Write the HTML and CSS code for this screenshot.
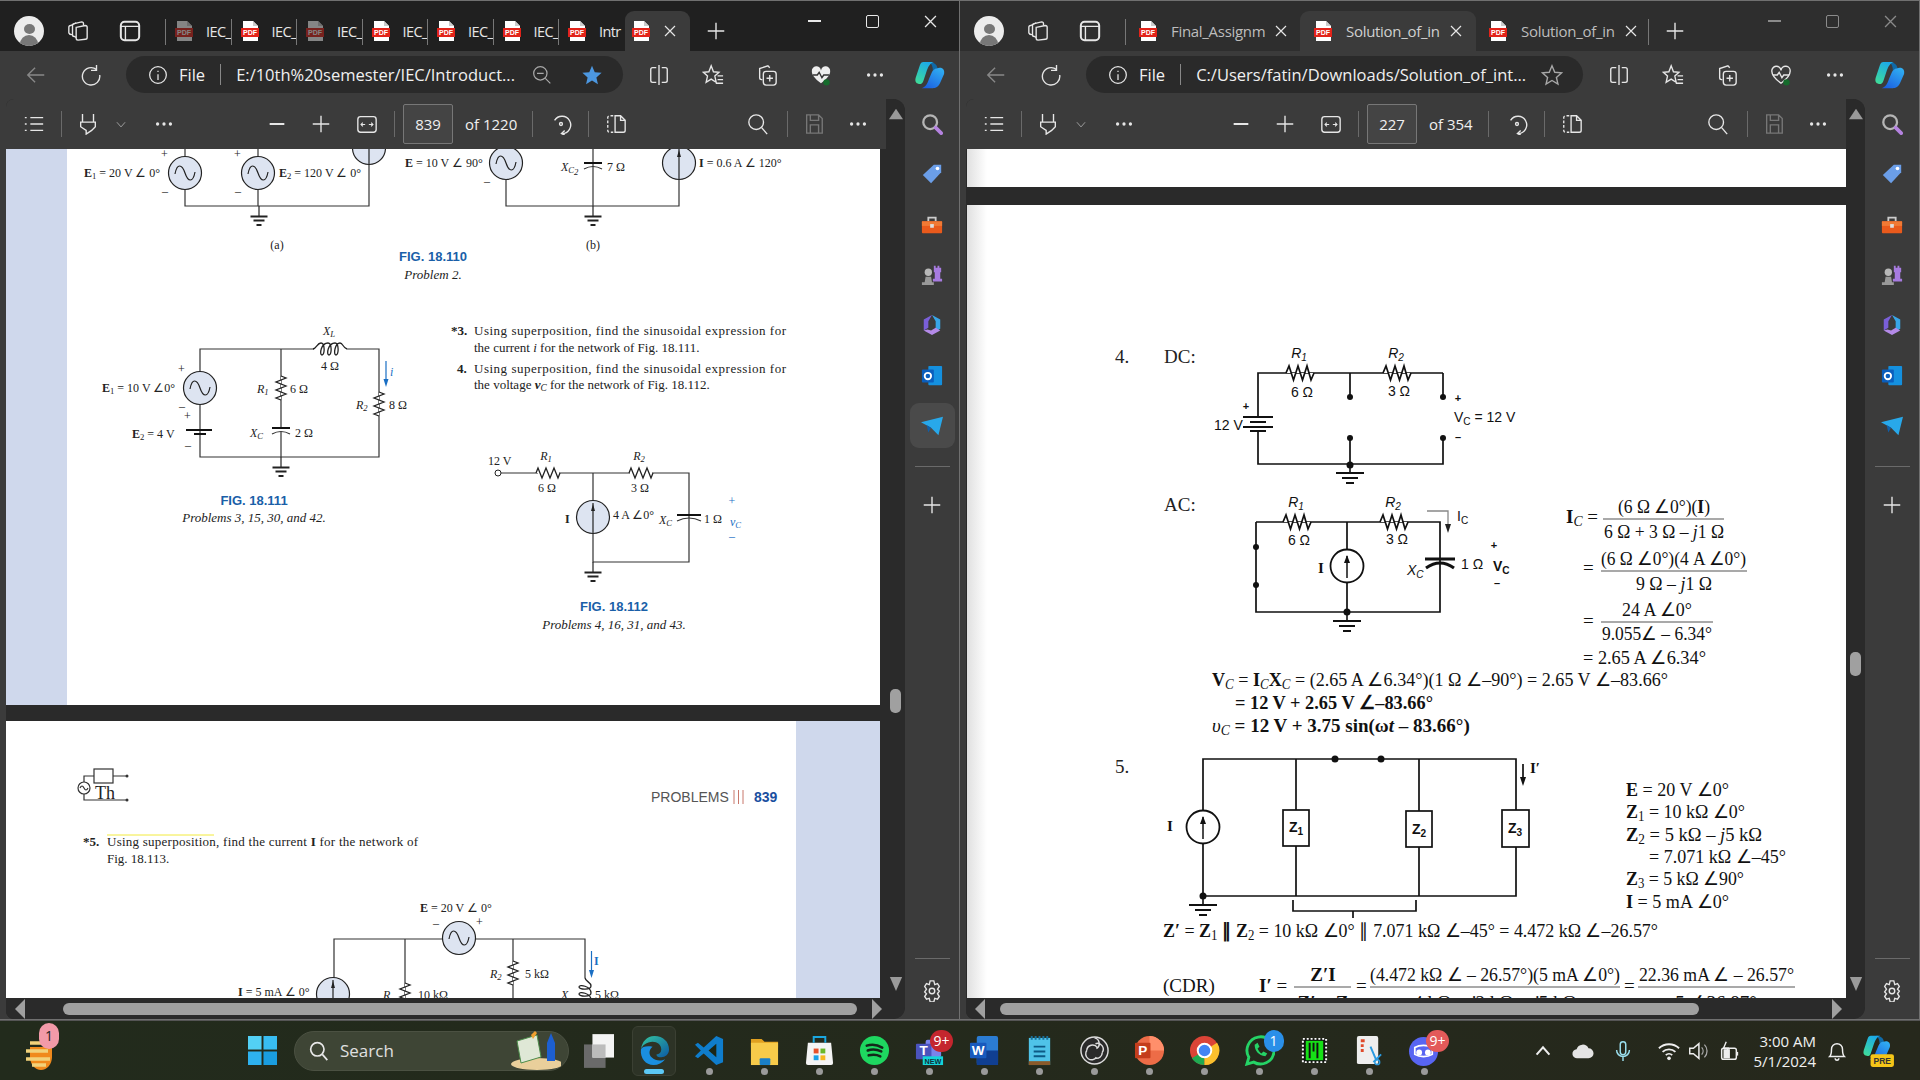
FILE: index.html
```html
<!DOCTYPE html>
<html lang="en">
<head>
    <meta charset="UTF-8">
    <title>Edge PDF windows</title>
    <link rel="stylesheet" href="styles.css">
</head>
<body>
<!-- shared icons and circuit parts -->
<svg class="defs" width="0" height="0">
    <defs>
        <linearGradient id="cop" x1="0.7" y1="0" x2="0.2" y2="1"><stop offset="0" stop-color="#1aa8ec"/><stop offset="1" stop-color="#3fdc9a"/></linearGradient>
        <linearGradient id="cop2" x1="0.8" y1="0" x2="0.1" y2="1"><stop offset="0" stop-color="#30aef2"/><stop offset="1" stop-color="#1a5ce0"/></linearGradient>
        <linearGradient id="edge" x1="0" y1="0" x2="1" y2="1"><stop offset="0" stop-color="#35c7a0"/><stop offset="1" stop-color="#0c59a4"/></linearGradient>
        <symbol id="pdf" viewBox="0 0 18 22">
            <path d="M2 1h10l5 5v15H2z" fill="#fff"/><path d="M12 1v5h5" fill="#ccc"/>
            <rect x="0" y="8" width="18" height="9" fill="#e2231a"/>
            <text x="9" y="15" class="pdf-word">PDF</text>
        </symbol>
        <symbol id="i-x" viewBox="0 0 12 12"><path d="M1 1l10 10M11 1L1 11" class="ln thin"/></symbol>
        <symbol id="i-workspace" viewBox="0 0 24 24"><path d="M10 8l10-2q2 0 2 2v11q0 2-2 2l-8 1q-2 0-2-2z" class="ln"/><path d="M10 19l-2-1q-2 0-2-2V6q0-2 2-2l8-2q2 0 2 2v2" class="ln"/><path d="M6 16H5q-2 0-3-2V8q0-2 2-2l6-3" class="ln"/></symbol>
        <symbol id="i-vtabs" viewBox="0 0 24 24"><rect x="2" y="2" width="20" height="20" rx="4" class="ln bold"/><path d="M2 7h20M7 7v15" class="ln"/></symbol>
        <symbol id="i-back" viewBox="0 0 24 24"><path d="M21 12H3M11 4l-8 8 8 8" class="ln"/></symbol>
        <symbol id="i-reload" viewBox="0 0 24 24"><path d="M18 6A9.500 9.500 0 1 0 21.500 12M18 1v6h-6" class="ln"/></symbol>
        <symbol id="i-info" viewBox="0 0 24 24"><circle cx="12" cy="12" r="10" class="ln"/><path d="M12 11v7M12 7v1.500" class="ln"/></symbol>
        <symbol id="i-zoomout" viewBox="0 0 24 24"><circle cx="10" cy="10" r="8" class="ln dim"/><path d="M6 10h8M16 16l6 6" class="ln dim"/></symbol>
        <symbol id="i-star" viewBox="0 0 24 24"><path d="M12 2l3 7 7.500.6-5.700 5 1.700 7.400-6.500-4-6.500 4 1.700-7.400-5.700-5L9 9z" class="ln dim"/></symbol>
        <symbol id="i-starfill" viewBox="0 0 24 24"><path d="M12 2l3 7 7.500.6-5.700 5 1.700 7.400-6.500-4-6.500 4 1.700-7.400-5.700-5L9 9z" fill="#4c97e0"/></symbol>
        <symbol id="i-split" viewBox="0 0 24 24"><path d="M9 4H5a2 2 0 0 0-2 2v12a2 2 0 0 0 2 2h4M15 4h4a2 2 0 0 1 2 2v12a2 2 0 0 1-2 2h-4M12 1v22" class="ln"/></symbol>
        <symbol id="i-favs" viewBox="0 0 24 24"><path d="M10 2l2.500 6.500 6 .5-4.500 4.200 1.500 6.800-5.500-3.500L4.500 20 6 13.200 1.500 9l6-.5zM17 13h6M17 17h6M15 21h8" class="ln"/></symbol>
        <symbol id="i-coll" viewBox="0 0 24 24"><path d="M7 17H6a2 2 0 0 1-2-2V5l9-3 2 2" class="ln"/><rect x="8" y="8" width="14" height="15" rx="3" class="ln"/><path d="M15 12v7M11.500 15.500h7" class="ln"/></symbol>
        <symbol id="i-heart" viewBox="0 0 24 24"><path d="M12 21C5 16 2 12 2 8a5 5 0 0 1 10-1 5 5 0 0 1 10 1c0 4-3 8-10 13z" class="ln"/><path d="M3 12h5l2-3 3 6 2-3h6" class="ln"/><circle cx="18" cy="20" r="3.500" fill="#156b2c"/></symbol>
        <symbol id="i-heartfill" viewBox="0 0 24 24"><path d="M12 21C5 16 2 12 2 8a5 5 0 0 1 10-1 5 5 0 0 1 10 1c0 4-3 8-10 13z" fill="#eee"/><path d="M3 12h5l2-3 3 6 2-3h6" fill="none" stroke="#333" stroke-width="1.500"/><circle cx="18" cy="20" r="3.500" fill="#156b2c"/></symbol>
        <symbol id="i-more" viewBox="0 0 24 24"><circle cx="5" cy="12" r="1.800" fill="#e6e6e6"/><circle cx="12" cy="12" r="1.800" fill="#e6e6e6"/><circle cx="19" cy="12" r="1.800" fill="#e6e6e6"/></symbol>
        <symbol id="i-copilot" viewBox="0 0 32 32"><path d="M15 2c5 0 9 3 9 7l-5 2c0-4-1-7-4-9z" fill="#0f6aa8"/><path d="M9 2H20C16 3 14 7 12 13L9 22C8 26 5 26 3 25C0 24 0 21 1 18L5 6C6 3 7 2 9 2Z" fill="url(#cop)"/><path d="M23 9C29 7 32 10 31 15L27 24C25 29 22 30 19 30H7C11 29 13 26 15 20L18 13C19 11 21 9 23 9Z" fill="url(#cop2)"/></symbol>
        <symbol id="i-list" viewBox="0 0 24 24"><path d="M8 5h14M8 12h14M8 19h14M2 5h2M2 12h2M2 19h2" class="ln"/></symbol>
        <symbol id="i-hl" viewBox="0 0 24 24"><path d="M6 1v9M18 1v9M4 10h16v5l-4 4v0l-6 4v-4l-6-4z" class="ln"/></symbol>
        <symbol id="i-chev" viewBox="0 0 24 24"><path d="M5 9l7 8 7-8" class="ln dim"/></symbol>
        <symbol id="i-minus" viewBox="0 0 24 24"><path d="M4 12h16" class="ln bold"/></symbol>
        <symbol id="i-plus" viewBox="0 0 24 24"><path d="M3 12h18M12 3v18" class="ln"/></symbol>
        <symbol id="i-fit" viewBox="0 0 24 24"><rect x="2" y="4" width="20" height="17" rx="3" class="ln"/><path d="M6 12.500h4M14 12.500h4M7.500 10.500l-2 2 2 2M16.500 10.500l2 2-2 2" class="ln thin"/></symbol>
        <symbol id="i-rotate" viewBox="0 0 24 24"><path d="M5 8A9.500 9.500 0 1 1 13 22.500" class="ln"/><path d="M16 19l-3.500 3.500 3.500 1.500" class="ln"/><circle cx="12" cy="12" r="1.600" class="ln"/></symbol>
        <symbol id="i-twopage" viewBox="0 0 24 24"><path d="M9 3H5a2 2 0 0 0-2 2v14a2 2 0 0 0 2 2h4" class="ln dash"/><path d="M11 3h6l5 5v11a2 2 0 0 1-2 2h-9zM17 3v5h5" class="ln"/></symbol>
        <symbol id="i-search" viewBox="0 0 24 24"><circle cx="10" cy="10" r="8" class="ln"/><path d="M16 16l6 7" class="ln"/></symbol>
        <symbol id="i-save" viewBox="0 0 24 24"><path d="M4 2h13l4 4v16H4zM8 2v6h9V2M8 22v-9h9v9" class="ln dim2"/></symbol>
        <symbol id="i-up" viewBox="0 0 16 12"><path d="M8 0l8 12H0z" fill="#9a9a9a"/></symbol>
        <symbol id="i-down" viewBox="0 0 16 16"><path d="M1 0h14L8 16z" fill="#9a9a9a"/></symbol>
        <symbol id="i-gear" viewBox="0 0 24 24"><path d="M10 1h4l1 4 3-1 2 3-2 3 2 2-2 3 2 3-2 3-3-1-1 4h-4l-1-4-3 1-2-3 2-3-2-2 2-3-2-3 2-3 3 1z" class="ln"/><circle cx="12" cy="12" r="3" class="ln"/></symbol>
        <symbol id="s-search" viewBox="0 0 24 24"><circle cx="10" cy="10" r="7.500" fill="none" stroke="#b5b5b5" stroke-width="2.500"/><path d="M16 16l6 6" stroke="#b583e0" stroke-width="4" stroke-linecap="round"/></symbol>
        <symbol id="s-tag" viewBox="0 0 24 24"><path d="M14 2h8v8L11 22 2 13z" fill="#6b9ee8"/><circle cx="18" cy="6" r="2" fill="#fff"/></symbol>
        <symbol id="s-box" viewBox="0 0 24 24"><path d="M8 8V4h8v4" fill="none" stroke="#ccc" stroke-width="2"/><rect x="1" y="8" width="22" height="13" rx="1" fill="#e95a1c"/><rect x="1" y="8" width="22" height="5" fill="#f07a35"/><rect x="10" y="11" width="4" height="4" fill="#ddd"/></symbol>
        <symbol id="s-chess" viewBox="0 0 24 24"><path d="M14 2h2v2h2V2h2v2h2v5h-1v7h2v3H13v-3h2V9h-1z" fill="#a77be0"/><circle cx="8" cy="9" r="4" fill="#b8b8b8"/><path d="M5 14h6l1 6h2v3H1v-3h3z" fill="#999"/></symbol>
        <symbol id="s-m365" viewBox="0 0 24 24"><path d="M12 1l9 5v10l-5 3V8z" fill="#38a6e8"/><path d="M12 1L3 6v12l5-3V8z" fill="#7a5fd8"/><path d="M3 18l9 5 9-5-5-3-5 3-4-1z" fill="#b48ae8"/></symbol>
        <symbol id="s-outlook" viewBox="0 0 24 24"><rect x="8" y="1" width="15" height="21" rx="1" fill="#1490df"/><rect x="1" y="5" width="13" height="14" rx="1" fill="#0a5ebd"/><circle cx="7.500" cy="12" r="3.500" fill="none" stroke="#fff" stroke-width="2"/></symbol>
        <symbol id="s-send" viewBox="0 0 24 24"><path d="M0 8l24-6-5 20-8-8z" fill="#28a8ea"/><path d="M6 11l5 3-3 5z" fill="#0f5ea8"/></symbol>
        <!-- circuit parts, drawn around 0,0 -->
        <g id="ac"><circle r="16.500" fill="#dde4f1" stroke="#222" stroke-width="1.200"/><path d="M-10 1C-8-10-3-9 0 0S8 10 10-1" fill="none" stroke="#222" stroke-width="1.200"/></g>
        <g id="isrc"><circle r="16.500" fill="#dde4f1" stroke="#222" stroke-width="1.200"/><path d="M0 16V-14" stroke="#222" stroke-width="1.200"/><path d="M0-13l-2 7h4z" fill="#222"/></g>
        <g id="isrc2"><circle r="16.500" fill="#fff" stroke="#111" stroke-width="1.800"/><path d="M0 12V-10" stroke="#111" stroke-width="1.500"/><path d="M0-11l-3 8h6z" fill="#111"/></g>
        <g id="gnd"><path d="M0 0V10" stroke="#222" stroke-width="1.200"/><path d="M-8.500 10.500H8.500M-5.500 14.500H5.500M-2.500 19H2.500" stroke="#222" stroke-width="2"/></g>
        <g id="gnd2"><path d="M0 0V9" stroke="#111" stroke-width="1.600"/><path d="M-14 9H14M-8 14H8M-4 19H4" stroke="#111" stroke-width="2.200"/></g>
        <path id="res-v" d="M0-12L5-10L-5-6L5-2L-5 2L5 6L-5 10L0 12" fill="#fff" stroke="#222" stroke-width="1.300"/>
        <path id="res-h" d="M-12 0L-10-5L-6 5L-2-5L2 5L6-5L10 5L12 0" fill="#fff" stroke="#222" stroke-width="1.300"/>
        <path id="res-h2" d="M-14 0L-11-7L-6.500 7L-2-7L2.500 7L7-7L11 7L14 0" fill="#fff" stroke="#111" stroke-width="1.700"/>
        <path id="coil" d="M-17 0C-13-1-13-6-9-6C-5-6-5 6-8 6C-11 6-9-6-2-6C2-6 2 6-1 6C-4 6-2-6 5-6C9-6 9 6 6 6C3 6 5-6 10-6C13-6 13-1 17 0" fill="none" stroke="#222" stroke-width="1.300"/>
    </defs>
</svg>

<div class="windows">
    <!-- left window -->
    <section class="window">
        <div class="tabstrip">
            <div class="profile"><span class="head"></span><span class="shoulders"></span></div>
            <svg class="icn wk"><use href="#i-workspace"/></svg>
            <svg class="icn vt"><use href="#i-vtabs"/></svg>
            <span class="tab-sep"></span>
            <div class="tab mini"><svg class="pdf-icon off"><use href="#pdf"/></svg><span class="tab-label">IEC_</span></div>
            <div class="tab mini"><svg class="pdf-icon"><use href="#pdf"/></svg><span class="tab-label">IEC_</span></div>
            <div class="tab mini"><svg class="pdf-icon off"><use href="#pdf"/></svg><span class="tab-label">IEC_</span></div>
            <div class="tab mini"><svg class="pdf-icon"><use href="#pdf"/></svg><span class="tab-label">IEC_</span></div>
            <div class="tab mini"><svg class="pdf-icon"><use href="#pdf"/></svg><span class="tab-label">IEC_</span></div>
            <div class="tab mini"><svg class="pdf-icon"><use href="#pdf"/></svg><span class="tab-label">IEC_</span></div>
            <div class="tab mini last"><svg class="pdf-icon"><use href="#pdf"/></svg><span class="tab-label">Intr</span></div>
            <div class="tab mini current"><svg class="pdf-icon"><use href="#pdf"/></svg><svg class="tab-x"><use href="#i-x"/></svg></div>
            <svg class="icn new-tab"><use href="#i-plus"/></svg>
            <div class="win-controls">
                <span class="win-btn"><i class="min"></i></span>
                <span class="win-btn"><i class="max"></i></span>
                <span class="win-btn"><svg class="close"><use href="#i-x"/></svg></span>
            </div>
        </div>
        <div class="addressbar">
            <svg class="icn back dim-icn"><use href="#i-back"/></svg>
            <svg class="icn reload"><use href="#i-reload"/></svg>
            <div class="pill">
                <svg class="icn info"><use href="#i-info"/></svg>
                <span class="scheme">File</span>
                <span class="url">E:/10th%20semester/IEC/Introduct...</span>
                <svg class="icn zoom-out"><use href="#i-zoomout"/></svg>
                <svg class="icn star"><use href="#i-starfill"/></svg>
            </div>
            <svg class="icn act first"><use href="#i-split"/></svg>
            <svg class="icn act"><use href="#i-favs"/></svg>
            <svg class="icn act"><use href="#i-coll"/></svg>
            <svg class="icn act"><use href="#i-heartfill"/></svg>
            <svg class="icn act"><use href="#i-more"/></svg>
            <svg class="copilot"><use href="#i-copilot"/></svg>
        </div>
        <div class="frame">
            <div class="pdf">
                <div class="pdf-main">
                    <div class="pdf-tools">
                        <span class="tbtn"><svg><use href="#i-list"/></svg></span>
                        <span class="tsep"></span>
                        <span class="tbtn hl"><svg><use href="#i-hl"/></svg></span>
                        <span class="tbtn chev"><svg><use href="#i-chev"/></svg></span>
                        <span class="tbtn dots"><svg><use href="#i-more"/></svg></span>
                        <div class="tool-mid">
                            <span class="tbtn"><svg><use href="#i-minus"/></svg></span>
                            <span class="tbtn"><svg><use href="#i-plus"/></svg></span>
                            <span class="tbtn fit"><svg><use href="#i-fit"/></svg></span>
                            <span class="tsep"></span>
                            <span class="page-box">839</span>
                            <span class="page-of">of 1220</span>
                            <span class="tsep after-of"></span>
                            <span class="tbtn rot"><svg><use href="#i-rotate"/></svg></span>
                            <span class="tsep"></span>
                            <span class="tbtn two"><svg><use href="#i-twopage"/></svg></span>
                        </div>
                        <div class="tool-end">
                            <span class="tbtn"><svg><use href="#i-search"/></svg></span>
                            <span class="tsep"></span>
                            <span class="tbtn save"><svg><use href="#i-save"/></svg></span>
                            <span class="tbtn"><svg><use href="#i-more"/></svg></span>
                        </div>
                    </div>
                    <div class="pages">
                        <div class="page left-one">
                            <svg viewBox="6 149 874 556" class="page-svg">
                                <rect x="6" y="149" width="61" height="556" fill="#cfd8ec"/>
                                <g class="w">
                                    <path d="M185 149V206H369V149M258 149V206M506 180V206H679V180M593 149V206"/>
                                    <path d="M200 405V457H379V349H347M314 349H200V372M281 349V428M281 432V457"/>
                                    <path d="M186 430H212M194 434H206" class="thick"/>
                                    <path d="M584 163H602" class="thick"/>
                                    <path d="M584 169Q593 164 602 169"/>
                                    <path d="M272 428H290" class="thick"/>
                                    <path d="M272 434Q281 429 290 434"/>
                                    <path d="M501 473H538M559 473H630M652 473H689V562H593V473"/>
                                    <path d="M677 515H701" class="thick"/>
                                    <path d="M677 521Q689 515 701 521"/>
                                </g>
                                <use href="#ac" x="185" y="173"/><use href="#ac" x="258" y="173"/>
                                <use href="#isrc" x="369" y="148"/><use href="#ac" x="506" y="163"/><use href="#isrc" x="679" y="163"/>
                                <use href="#gnd" x="259" y="206"/><use href="#gnd" x="593" y="206"/>
                                <use href="#ac" x="200" y="388"/><use href="#coil" x="330" y="349"/>
                                <use href="#res-v" x="281" y="388"/><use href="#res-v" x="379" y="404"/>
                                <use href="#gnd" x="281" y="457"/>
                                <circle cx="498" cy="473" r="3" fill="#fff" stroke="#222"/>
                                <use href="#res-h" x="548" y="473"/><use href="#res-h" x="641" y="473"/>
                                <use href="#isrc" x="593" y="517"/><use href="#gnd" x="593" y="562"/>
                                <path d="M386 361V384" class="arrow"/><path d="M386 387l-2.500-8h5z" fill="#1a6fc4"/>

                                <g class="tx s11">
                                    <text x="161" y="158">+</text><text x="234" y="158">+</text><text x="162" y="195">–</text><text x="235" y="195">–</text>
                                    <text x="84" y="177"><tspan class="bd">E</tspan><tspan class="sub" dy="2">1</tspan><tspan dy="-2"> = 20 V ∠ 0°</tspan></text>
                                    <text x="279" y="177"><tspan class="bd">E</tspan><tspan class="sub" dy="2">2</tspan><tspan dy="-2"> = 120 V ∠ 0°</tspan></text>
                                    <text x="405" y="167"><tspan class="bd">E</tspan> = 10 V ∠ 90°</text>
                                    <text x="484" y="185">–</text>
                                    <text x="561" y="171" class="it">X<tspan class="sub" dy="2">C</tspan><tspan class="sub" dy="2">2</tspan></text>
                                    <text x="607" y="171">7 Ω</text>
                                    <text x="699" y="167"><tspan class="bd">I</tspan> = 0.6 A ∠ 120°</text>
                                    <text x="277" y="249" class="mid">(a)</text><text x="593" y="249" class="mid">(b)</text>

                                    <text x="329" y="335" class="mid it">X<tspan class="sub" dy="2">L</tspan></text>
                                    <text x="330" y="370" class="mid">4 Ω</text>
                                    <text x="178" y="373">+</text><text x="179" y="410">–</text>
                                    <text x="102" y="392"><tspan class="bd">E</tspan><tspan class="sub" dy="2">1</tspan><tspan dy="-2"> = 10 V ∠0°</tspan></text>
                                    <text x="184" y="420">+</text><text x="185" y="449">–</text>
                                    <text x="132" y="438"><tspan class="bd">E</tspan><tspan class="sub" dy="2">2</tspan><tspan dy="-2"> = 4 V</tspan></text>
                                    <text x="257" y="393" class="it">R<tspan class="sub" dy="2">1</tspan></text><text x="290" y="393">6 Ω</text>
                                    <text x="356" y="409" class="it">R<tspan class="sub" dy="2">2</tspan></text><text x="389" y="409">8 Ω</text>
                                    <text x="250" y="437" class="it">X<tspan class="sub" dy="2">C</tspan></text><text x="295" y="437">2 Ω</text>
                                    <text x="390" y="376" class="it blue">i</text>

                                    <text x="488" y="465">12 V</text>
                                    <text x="546" y="460" class="mid it">R<tspan class="sub" dy="2">1</tspan></text><text x="547" y="492" class="mid">6 Ω</text>
                                    <text x="639" y="460" class="mid it">R<tspan class="sub" dy="2">2</tspan></text><text x="640" y="492" class="mid">3 Ω</text>
                                    <text x="565" y="523" class="bd">I</text>
                                    <text x="613" y="519">4 A ∠0°</text>
                                    <text x="659" y="524" class="it">X<tspan class="sub" dy="2">C</tspan></text>
                                    <text x="704" y="523">1 Ω</text>
                                    <text x="730" y="526" class="it blue">v<tspan class="sub" dy="2">C</tspan></text>
                                    <text x="732" y="505" class="mid blue">+</text><text x="732" y="540" class="mid blue">–</text>
                                </g>
                                <g class="tx s13">
                                    <text x="451" y="335"><tspan class="bd">*3.</tspan></text>
                                    <text x="474" y="335" textLength="312">Using superposition, find the sinusoidal expression for</text>
                                    <text x="474" y="352">the current <tspan class="it">i</tspan> for the network of Fig. 18.111.</text>
                                    <text x="457" y="373"><tspan class="bd">4.</tspan></text>
                                    <text x="474" y="373" textLength="312">Using superposition, find the sinusoidal expression for</text>
                                    <text x="474" y="389">the voltage <tspan class="bd it">v</tspan><tspan class="sub it" dy="2">C</tspan><tspan dy="-2"> for the network of Fig. 18.112.</tspan></text>
                                    <text x="433" y="279" class="mid it">Problem 2.</text>
                                    <text x="254" y="522" class="mid it">Problems 3, 15, 30, and 42.</text>
                                    <text x="614" y="629" class="mid it">Problems 4, 16, 31, and 43.</text>
                                </g>
                                <g class="fig">
                                    <text x="433" y="261">FIG. 18.110</text>
                                    <text x="254" y="505">FIG. 18.111</text>
                                    <text x="614" y="611">FIG. 18.112</text>
                                </g>
                            </svg>
                        </div>
                        <div class="page left-two">
                            <svg viewBox="6 721 874 277" class="page-svg">
                                <rect x="796" y="721" width="84" height="277" fill="#cfd8ec"/>
                                <g class="w">
                                    <rect x="94" y="769" width="19" height="14" fill="none"/>
                                    <path d="M84 782V776H94M113 776H127M84 794V800H127"/>
                                    <circle cx="84" cy="788" r="6" fill="#fff"/>
                                    <path d="M80 788Q82 784 84 788T88 788"/>
                                    <path d="M334 998V939H585V978M405 939V998M513 939V998"/>
                                </g>
                                <circle cx="127" cy="776" r="1.500" fill="#333"/><circle cx="127" cy="800" r="1.500" fill="#333"/>
                                <text x="95" y="799" class="th">Th</text>
                                <path d="M107 835H214" stroke="#f2ea3c" stroke-width="1"/>
                                <use href="#ac" x="459" y="938"/><use href="#isrc" x="333" y="994"/>
                                <use href="#res-v" x="405" y="995"/><use href="#res-v" x="513" y="973"/>
                                <use href="#coil" x="0" y="0" transform="translate(585 995) rotate(90)"/>
                                <path d="M591.500 951V974" class="arrow"/><path d="M591.500 978l-2.500-8h5z" fill="#1a6fc4"/>
                                <text x="651" y="802" class="prob">PROBLEMS</text>
                                <path d="M734 790V804M738.500 790V804M743 790V804" stroke="#c8776a" stroke-width="1"/>
                                <text x="754" y="802" class="prob-no">839</text>
                                <g class="tx s13">
                                    <text x="83" y="846" class="bd">*5.</text>
                                    <text x="107" y="846" textLength="311">Using superposition, find the current <tspan class="bd">I</tspan> for the network of</text>
                                    <text x="107" y="863">Fig. 18.113.</text>
                                </g>
                                <g class="tx s11">
                                    <text x="420" y="912"><tspan class="bd">E</tspan> = 20 V ∠ 0°</text>
                                    <text x="433" y="927">–</text><text x="476" y="926">+</text>
                                    <text x="238" y="996"><tspan class="bd">I</tspan> = 5 mA ∠ 0°</text>
                                    <text x="383" y="999" class="it">R</text><text x="418" y="999">10 kΩ</text>
                                    <text x="490" y="978" class="it">R<tspan class="sub" dy="2">2</tspan></text><text x="525" y="978">5 kΩ</text>
                                    <text x="561" y="999" class="it">X</text><text x="595" y="999">5 kΩ</text>
                                    <text x="594" y="965" class="bd blue">I</text>
                                </g>
                            </svg>
                        </div>
                    </div>
                    <div class="hscroll">
                        <i class="arrow-l"></i>
                        <span class="hthumb"></span>
                        <i class="arrow-r"></i>
                    </div>
                </div>
                <div class="vscroll">
                    <svg class="varrow"><use href="#i-up"/></svg>
                    <span class="vthumb"></span>
                    <svg class="varrow down"><use href="#i-down"/></svg>
                </div>
            </div>
            <aside class="sidebar">
                <span class="side-slot"><svg><use href="#s-search"/></svg></span>
                <span class="side-slot"><svg><use href="#s-tag"/></svg></span>
                <span class="side-slot"><svg><use href="#s-box"/></svg></span>
                <span class="side-slot"><svg><use href="#s-chess"/></svg></span>
                <span class="side-slot"><svg><use href="#s-m365"/></svg></span>
                <span class="side-slot"><svg><use href="#s-outlook"/></svg></span>
                <span class="side-slot on"><svg><use href="#s-send"/></svg></span>
                <span class="side-sep"></span>
                <span class="side-slot add"><svg><use href="#i-plus"/></svg></span>
                <span class="side-sep low"></span>
                <span class="side-slot gear"><svg><use href="#i-gear"/></svg></span>
            </aside>
        </div>
    </section>

    <!-- right window -->
    <section class="window inactive">
        <div class="tabstrip">
            <div class="profile"><span class="head"></span><span class="shoulders"></span></div>
            <svg class="icn wk"><use href="#i-workspace"/></svg>
            <svg class="icn vt"><use href="#i-vtabs"/></svg>
            <span class="tab-sep"></span>
            <div class="tab wide first-wide"><svg class="pdf-icon"><use href="#pdf"/></svg><span class="tab-label">Final_Assignm</span><svg class="tab-x"><use href="#i-x"/></svg></div>
            <div class="tab wide current"><svg class="pdf-icon"><use href="#pdf"/></svg><span class="tab-label">Solution_of_in</span><svg class="tab-x"><use href="#i-x"/></svg></div>
            <div class="tab wide third"><svg class="pdf-icon"><use href="#pdf"/></svg><span class="tab-label">Solution_of_in</span><svg class="tab-x"><use href="#i-x"/></svg></div>
            <svg class="icn new-tab"><use href="#i-plus"/></svg>
            <div class="win-controls">
                <span class="win-btn"><i class="min"></i></span>
                <span class="win-btn"><i class="max"></i></span>
                <span class="win-btn"><svg class="close"><use href="#i-x"/></svg></span>
            </div>
        </div>
        <div class="addressbar">
            <svg class="icn back dim-icn"><use href="#i-back"/></svg>
            <svg class="icn reload"><use href="#i-reload"/></svg>
            <div class="pill">
                <svg class="icn info"><use href="#i-info"/></svg>
                <span class="scheme">File</span>
                <span class="url">C:/Users/fatin/Downloads/Solution_of_int...</span>
                <svg class="icn star outline"><use href="#i-star"/></svg>
            </div>
            <svg class="icn act first"><use href="#i-split"/></svg>
            <svg class="icn act"><use href="#i-favs"/></svg>
            <svg class="icn act"><use href="#i-coll"/></svg>
            <svg class="icn act"><use href="#i-heart"/></svg>
            <svg class="icn act"><use href="#i-more"/></svg>
            <svg class="copilot"><use href="#i-copilot"/></svg>
        </div>
        <div class="frame">
            <div class="pdf">
                <div class="pdf-main">
                    <div class="pdf-tools">
                        <span class="tbtn"><svg><use href="#i-list"/></svg></span>
                        <span class="tsep"></span>
                        <span class="tbtn hl"><svg><use href="#i-hl"/></svg></span>
                        <span class="tbtn chev"><svg><use href="#i-chev"/></svg></span>
                        <span class="tbtn dots"><svg><use href="#i-more"/></svg></span>
                        <div class="tool-mid shifted">
                            <span class="tbtn"><svg><use href="#i-minus"/></svg></span>
                            <span class="tbtn"><svg><use href="#i-plus"/></svg></span>
                            <span class="tbtn fit"><svg><use href="#i-fit"/></svg></span>
                            <span class="tsep"></span>
                            <span class="page-box">227</span>
                            <span class="page-of">of 354</span>
                            <span class="tsep after-of"></span>
                            <span class="tbtn rot"><svg><use href="#i-rotate"/></svg></span>
                            <span class="tsep"></span>
                            <span class="tbtn two"><svg><use href="#i-twopage"/></svg></span>
                        </div>
                        <div class="tool-end">
                            <span class="tbtn"><svg><use href="#i-search"/></svg></span>
                            <span class="tsep"></span>
                            <span class="tbtn save"><svg><use href="#i-save"/></svg></span>
                            <span class="tbtn"><svg><use href="#i-more"/></svg></span>
                        </div>
                    </div>
                    <div class="pages scan">
                        <div class="page scan-top"></div>
                        <div class="page scan-main">
                            <svg viewBox="967 205 879 793" class="page-svg">
                                <g class="tx s19">
                                    <text x="1115" y="363">4.</text><text x="1164" y="363">DC:</text>
                                    <text x="1164" y="511">AC:</text>
                                    <text x="1115" y="773">5.</text>
                                </g>
                                <!-- DC circuit -->
                                <g class="w2">
                                    <path d="M1350 373V397M1443 373V397M1350 438V464M1443 438V464H1258V431M1258 417V373H1443"/>
                                    <path d="M1243 417H1273M1250 422H1266M1243 427H1273M1250 431H1266" class="thick"/>
                                    <path d="M1256 522V612H1440V522H1256M1347 522V612M1440 559"/>
                                    <path d="M1427 511H1448V530" class="thin-gray"/>
                                    <path d="M1203 759H1516V896H1203ZM1296 759V896M1419 759V896"/>
                                    <path d="M1293 900V911H1416V900M1353 911V918"/>
                                    <path d="M1523 764V780"/>
                                    <path d="M1425 559H1455" class="thick2"/>
                                    <path d="M1426 568Q1440 558 1454 568" class="thick2"/>
                                </g>
                                <path d="M1441 533l-3-9h6z" fill="#222" transform="translate(7 0)"/>
                                <path d="M1523 786l-3-9h6z" fill="#111"/>
                                <use href="#res-h2" x="1300" y="373"/><use href="#res-h2" x="1397" y="373"/>
                                <use href="#res-h2" x="1297" y="522"/><use href="#res-h2" x="1394" y="522"/>
                                <use href="#gnd2" x="1350" y="464"/><use href="#gnd2" x="1347" y="612"/><use href="#gnd2" x="1203" y="896"/>
                                <use href="#isrc2" x="1347" y="566"/><use href="#isrc2" x="1203" y="827"/>
                                <g fill="#111">
                                    <circle cx="1350" cy="397" r="3"/><circle cx="1443" cy="397" r="3"/><circle cx="1350" cy="438" r="3"/><circle cx="1443" cy="438" r="3"/><circle cx="1350" cy="465" r="3.500"/>
                                    <circle cx="1256" cy="547" r="3"/><circle cx="1256" cy="585" r="3"/><circle cx="1347" cy="612" r="3.500"/>
                                    <circle cx="1335" cy="759" r="3.500"/><circle cx="1381" cy="759" r="3.500"/><circle cx="1203" cy="896" r="3.500"/>
                                </g>
                                <g class="zbox">
                                    <rect x="1283" y="810" width="26" height="36"/><rect x="1406" y="811" width="26" height="36"/><rect x="1502" y="810" width="27" height="37"/>
                                </g>
                                <g class="sf">
                                    <text x="1299" y="358" class="mid it">R<tspan class="sub" dy="3">1</tspan></text>
                                    <text x="1396" y="358" class="mid it">R<tspan class="sub" dy="3">2</tspan></text>
                                    <text x="1302" y="397" class="mid">6 Ω</text><text x="1399" y="396" class="mid">3 Ω</text>
                                    <text x="1246" y="410" class="mid s">+</text>
                                    <text x="1214" y="430">12 V</text>
                                    <text x="1458" y="402" class="mid s">+</text><text x="1458" y="441" class="mid s">–</text>
                                    <text x="1454" y="422">V<tspan class="sub" dy="3">C</tspan><tspan dy="-3"> = 12 V</tspan></text>
                                    <text x="1296" y="507" class="mid it">R<tspan class="sub" dy="3">1</tspan></text>
                                    <text x="1393" y="507" class="mid it">R<tspan class="sub" dy="3">2</tspan></text>
                                    <text x="1299" y="545" class="mid">6 Ω</text><text x="1397" y="544" class="mid">3 Ω</text>
                                    <text x="1457" y="521">I<tspan class="sub" dy="3">C</tspan></text>
                                    <text x="1407" y="575" class="it">X<tspan class="sub" dy="3">C</tspan></text>
                                    <text x="1461" y="569">1 Ω</text>
                                    <text x="1493" y="571" class="bd">V<tspan class="sub" dy="3">C</tspan></text>
                                    <text x="1494" y="549" class="mid s">+</text><text x="1497" y="587" class="mid s">–</text>
                                    <text x="1289" y="832" class="bd">Z<tspan class="sub" dy="3">1</tspan></text>
                                    <text x="1412" y="834" class="bd">Z<tspan class="sub" dy="3">2</tspan></text>
                                    <text x="1508" y="833" class="bd">Z<tspan class="sub" dy="3">3</tspan></text>
                                </g>
                                <g class="tx s19 eq">
                                    <text x="1318" y="573" class="bd s15">I</text>
                                    <text x="1167" y="831" class="bd s15">I</text>
                                    <text x="1530" y="773" class="bd s15">I′</text>

                                    <text x="1566" y="523"><tspan class="bd">I</tspan><tspan class="sub it" dy="3">C</tspan><tspan dy="-3"> =</tspan></text>
                                    <text x="1618" y="513" textLength="92" lengthAdjust="spacingAndGlyphs">(6 Ω ∠0°)(<tspan class="bd">I</tspan>)</text>
                                    <text x="1604" y="538" textLength="120" lengthAdjust="spacingAndGlyphs">6 Ω + 3 Ω – <tspan class="it">j</tspan>1 Ω</text>
                                    <text x="1583" y="574">=</text>
                                    <text x="1601" y="565" textLength="145" lengthAdjust="spacingAndGlyphs">(6 Ω ∠0°)(4 A ∠0°)</text>
                                    <text x="1636" y="590" textLength="76" lengthAdjust="spacingAndGlyphs">9 Ω – <tspan class="it">j</tspan>1 Ω</text>
                                    <text x="1583" y="627">=</text>
                                    <text x="1622" y="616" textLength="70" lengthAdjust="spacingAndGlyphs">24 A ∠0°</text>
                                    <text x="1602" y="640" textLength="110" lengthAdjust="spacingAndGlyphs">9.055∠ – 6.34°</text>
                                    <text x="1583" y="664" textLength="123" lengthAdjust="spacingAndGlyphs">= 2.65 A ∠6.34°</text>
                                    <text x="1212" y="686" textLength="456" lengthAdjust="spacingAndGlyphs"><tspan class="bd">V</tspan><tspan class="sub it" dy="3">C</tspan><tspan dy="-3"> = </tspan><tspan class="bd">I</tspan><tspan class="sub it" dy="3">C</tspan><tspan class="bd" dy="-3">X</tspan><tspan class="sub it" dy="3">C</tspan><tspan dy="-3"> = (2.65 A ∠6.34°)(1 Ω ∠–90°) = 2.65 V ∠–83.66°</tspan></text>
                                    <text x="1235" y="709" class="bd" textLength="198" lengthAdjust="spacingAndGlyphs">= 12 V + 2.65 V ∠–83.66°</text>
                                    <text x="1212" y="732"><tspan class="it">υ</tspan><tspan class="sub it" dy="3">C</tspan><tspan class="bd" dy="-3"> = 12 V + 3.75 sin(ω<tspan class="it">t</tspan> – 83.66°)</tspan></text>

                                    <text x="1626" y="796" textLength="103" lengthAdjust="spacingAndGlyphs"><tspan class="bd">E</tspan> = 20 V ∠0°</text>
                                    <text x="1626" y="818" textLength="119" lengthAdjust="spacingAndGlyphs"><tspan class="bd">Z</tspan><tspan class="sub" dy="3">1</tspan><tspan dy="-3"> = 10 kΩ ∠0°</tspan></text>
                                    <text x="1626" y="841" textLength="136" lengthAdjust="spacingAndGlyphs"><tspan class="bd">Z</tspan><tspan class="sub" dy="3">2</tspan><tspan dy="-3"> = 5 kΩ – </tspan><tspan class="it">j</tspan>5 kΩ</text>
                                    <text x="1649" y="863" textLength="137" lengthAdjust="spacingAndGlyphs">= 7.071 kΩ ∠–45°</text>
                                    <text x="1626" y="885" textLength="118" lengthAdjust="spacingAndGlyphs"><tspan class="bd">Z</tspan><tspan class="sub" dy="3">3</tspan><tspan dy="-3"> = 5 kΩ ∠90°</tspan></text>
                                    <text x="1626" y="908" textLength="103" lengthAdjust="spacingAndGlyphs"><tspan class="bd">I</tspan> = 5 mA ∠0°</text>
                                    <text x="1163" y="937" textLength="495" lengthAdjust="spacingAndGlyphs"><tspan class="bd">Z′</tspan> = <tspan class="bd">Z</tspan><tspan class="sub" dy="3">1</tspan><tspan class="bd" dy="-3"> ∥ Z</tspan><tspan class="sub" dy="3">2</tspan><tspan dy="-3"> = 10 kΩ ∠0° ∥ 7.071 kΩ ∠–45° = 4.472 kΩ ∠–26.57°</tspan></text>
                                    <text x="1163" y="992">(CDR)</text>
                                    <text x="1259" y="992"><tspan class="bd">I′</tspan> =</text>
                                    <text x="1323" y="981" class="mid bd">Z′I</text>
                                    <text x="1323" y="1009" class="mid"><tspan class="bd">Z′</tspan> + <tspan class="bd">Z</tspan></text>
                                    <text x="1356" y="992">=</text>
                                    <text x="1370" y="981" textLength="250" lengthAdjust="spacingAndGlyphs">(4.472 kΩ ∠ – 26.57°)(5 mA ∠0°)</text>
                                    <text x="1495" y="1009" class="mid">4 kΩ – <tspan class="it">j</tspan>2 kΩ + <tspan class="it">j</tspan>5 kΩ</text>
                                    <text x="1624" y="992">=</text>
                                    <text x="1639" y="981" textLength="155" lengthAdjust="spacingAndGlyphs">22.36 mA ∠ – 26.57°</text>
                                    <text x="1716" y="1009" class="mid">5 ∠36.87°</text>
                                </g>
                                <path d="M1603 519H1724M1601 571H1747M1601 622H1713M1294 987H1351M1370 987H1620M1638 987H1795" stroke="#555" stroke-width="1.200"/>
                            </svg>
                        </div>
                    </div>
                    <div class="hscroll">
                        <i class="arrow-l"></i>
                        <span class="hthumb short"></span>
                        <i class="arrow-r"></i>
                    </div>
                </div>
                <div class="vscroll">
                    <svg class="varrow"><use href="#i-up"/></svg>
                    <span class="vthumb high"></span>
                    <svg class="varrow down"><use href="#i-down"/></svg>
                </div>
            </div>
            <aside class="sidebar">
                <span class="side-slot"><svg><use href="#s-search"/></svg></span>
                <span class="side-slot"><svg><use href="#s-tag"/></svg></span>
                <span class="side-slot"><svg><use href="#s-box"/></svg></span>
                <span class="side-slot"><svg><use href="#s-chess"/></svg></span>
                <span class="side-slot"><svg><use href="#s-m365"/></svg></span>
                <span class="side-slot"><svg><use href="#s-outlook"/></svg></span>
                <span class="side-slot"><svg><use href="#s-send"/></svg></span>
                <span class="side-sep"></span>
                <span class="side-slot add"><svg><use href="#i-plus"/></svg></span>
                <span class="side-sep low"></span>
                <span class="side-slot gear"><svg><use href="#i-gear"/></svg></span>
            </aside>
        </div>
    </section>
</div>

<footer class="taskbar">
    <span class="tb-weather">
        <svg viewBox="0 0 32 40"><path d="M6 16h22v10c0 7-5 13-11 13S6 33 6 26z" fill="#f08a1c"/><path d="M6 12h12M2 20h22M2 28h24M8 34h14" stroke="#f2d27a" stroke-width="3.500"/></svg>
        <b class="badge pink">1</b>
    </span>
    <svg class="tb-start" viewBox="0 0 30 30"><path d="M0 0h14v14H0z" fill="#53d0f5"/><path d="M16 0h14v14H16z" fill="#38bdf2"/><path d="M0 16h14v14H0z" fill="#2eb2ef"/><path d="M16 16h14v14H16z" fill="#1a9de0"/></svg>
    <div class="tb-search">
        <svg viewBox="0 0 24 24"><circle cx="10" cy="10" r="8" fill="none" stroke="#e8e8e8" stroke-width="2"/><path d="M16 16l6 7" stroke="#e8e8e8" stroke-width="2"/></svg>
        <span>Search</span>
        <svg class="scene" viewBox="0 0 52 40"><ellipse cx="28" cy="33" rx="26" ry="6" fill="#e9cf9b"/><path d="M8 10l20-6 4 22-20 6z" fill="#dfe8d6" stroke="#4c8c4a"/><path d="M22 4l4-4 2 2-4 6z" fill="#f0a030"/><path d="M38 30V12l4-10 4 10v18z" fill="#1d5fd0"/></svg>
    </div>
    <svg class="tb-taskview" viewBox="0 0 32 36"><rect x="0" y="11" width="23" height="25" fill="#6a6a6a"/><rect x="9" y="0" width="23" height="25" fill="#f4f4f4"/><rect x="9" y="11" width="14" height="14" fill="#bcbcbc"/></svg>
    <div class="tb-apps">
        <span class="tb-app active"><svg viewBox="0 0 32 32"><path d="M16 1c9 0 15 6 15 14 0 5-4 8-8 8-3 0-5-1-5-3 3 0 5-2 5-5 0-5-4-8-9-8C8 7 3 11 2 15 3 7 8 1 16 1z" fill="url(#edge)"/><path d="M2 15c-1 9 5 16 13 16 5 0 9-2 12-6-4 2-10 2-14-2-3-3-3-8 1-11C8 11 3 12 2 15z" fill="#1a8fe0"/></svg><i class="run"></i></span>
        <span class="tb-app"><svg viewBox="0 0 32 32"><path d="M23 1l7 3v24l-7 3L10 19l-6 5-3-2 6-6-6-6 3-2 6 5z" fill="#0f7dcc"/><path d="M23 9l-8 7 8 7z" fill="#1c2616"/></svg><i class="run"></i></span>
        <span class="tb-app"><svg viewBox="0 0 32 32"><path d="M2 4h11l3 3h14v6H2z" fill="#e0a020"/><rect x="2" y="8" width="28" height="23" fill="#f7cb4a"/><rect x="11" y="24" width="11" height="7" rx="1" fill="#1a7fc8"/></svg><i class="run"></i></span>
        <span class="tb-app"><svg viewBox="0 0 32 32"><path d="M4 8h24l2 21a2 2 0 0 1-2 2H4a2 2 0 0 1-2-2z" fill="#f4f4f4"/><path d="M10 8V2h12v6" fill="none" stroke="#1aa7e0" stroke-width="2"/><rect x="10" y="14" width="5" height="5" fill="#e8502a"/><rect x="17" y="14" width="5" height="5" fill="#6ab82a"/><rect x="10" y="21" width="5" height="5" fill="#1aa0e8"/><rect x="17" y="21" width="5" height="5" fill="#f5b820"/></svg><i class="run"></i></span>
        <span class="tb-app"><svg viewBox="0 0 32 32"><circle cx="16" cy="16" r="15" fill="#1ed760"/><path d="M8 11c6-2 11-1 16 2M9 16c5-2 10-1 14 1M10 21c4-1 8-1 12 1" fill="none" stroke="#14271a" stroke-width="2.600" stroke-linecap="round"/></svg><i class="run"></i></span>
        <span class="tb-app"><svg viewBox="0 0 32 32"><rect x="12" y="5" width="16" height="18" rx="2" fill="#7b83eb"/><rect x="2" y="9" width="16" height="16" rx="1" fill="#4b53bc"/><text x="10" y="21" class="ico-t">T</text><rect x="9" y="22" width="21" height="9" fill="#14d4d8"/><text x="19.500" y="29.500" class="ico-new">NEW</text></svg><b class="badge red">9+</b><i class="run"></i></span>
        <span class="tb-app"><svg viewBox="0 0 32 32"><rect x="8" y="1" width="22" height="30" rx="2" fill="#2b7cd3"/><rect x="8" y="16" width="22" height="15" fill="#103f91"/><rect x="1" y="8" width="17" height="16" rx="1" fill="#185abd"/><text x="9.500" y="21" class="ico-t">W</text></svg><i class="run"></i></span>
        <span class="tb-app"><svg viewBox="0 0 32 32"><rect x="5" y="3" width="22" height="28" fill="#4fc3e8"/><rect x="5" y="27" width="22" height="4" fill="#8a5a2a"/><path d="M10 12h12M10 17h12M10 22h12" stroke="#0d5a85" stroke-width="2"/><path d="M8 1v4M12 1v4M16 1v4M20 1v4M24 1v4" stroke="#1a6f9a" stroke-width="2"/></svg><i class="run"></i></span>
        <span class="tb-app"><svg viewBox="0 0 32 32"><circle cx="16" cy="16" r="14" fill="#2a2a2a" stroke="#ddd" stroke-width="1.500"/><path d="M16 3a6 6 0 0 1 2 11M8 16a6 6 0 0 1 11-3M8 16a6 6 0 0 0 10 7M24 18a6 6 0 0 1-7 6M24 18a6 6 0 0 0-7-9" fill="none" stroke="#ddd" stroke-width="1.500"/></svg><i class="run"></i></span>
        <span class="tb-app"><svg viewBox="0 0 32 32"><circle cx="16" cy="16" r="15" fill="#ed6c47"/><path d="M16 1a15 15 0 0 1 15 15H16z" fill="#ff8f6b"/><rect x="1" y="8" width="16" height="16" rx="1" fill="#c43e1c"/><text x="9" y="21" class="ico-t">P</text></svg><i class="run"></i></span>
        <span class="tb-app"><svg viewBox="0 0 32 32"><circle cx="16" cy="16" r="15" fill="#db4437"/><path d="M16 16L3 24A15 15 0 0 0 16 31z" fill="#1faa52"/><path d="M16 16l13-8A15 15 0 0 1 16 31z" fill="#fbc02d"/><circle cx="16" cy="16" r="7" fill="#4285f4" stroke="#fff" stroke-width="2"/></svg><i class="run"></i></span>
        <span class="tb-app"><svg viewBox="0 0 32 32"><path d="M3 30l2-7A14 14 0 1 1 10 28z" fill="none" stroke="#25d366" stroke-width="3"/><path d="M11 10c0 6 4 11 11 12l2-3-4-2-2 2c-2-1-3-3-4-5l2-2-2-4z" fill="#25d366"/></svg><b class="badge blue">1</b><i class="run"></i></span>
        <span class="tb-app"><svg viewBox="0 0 32 32"><rect x="4" y="4" width="24" height="24" fill="#111" stroke="#fff" stroke-width="2" stroke-dasharray="2 2"/><rect x="7" y="6" width="18" height="20" fill="#16e016"/><path d="M11 8v16M15 8v9M19 8v16" stroke="#111" stroke-width="2"/></svg><i class="run"></i></span>
        <span class="tb-app"><svg viewBox="0 0 32 32"><rect x="3" y="1" width="22" height="29" rx="2" fill="#eee"/><path d="M7 6h4M7 11h3M7 16h3" stroke="#e04a2a" stroke-width="3"/><path d="M17 12l6 14M28 20l-8 8" stroke="#2a9ae0" stroke-width="2"/><circle cx="24" cy="28" r="2.500" fill="none" stroke="#2a9ae0" stroke-width="1.500"/></svg><i class="run"></i></span>
        <span class="tb-app"><svg viewBox="0 0 32 32"><ellipse cx="15" cy="17" rx="15" ry="15" fill="#5865f2"/><circle cx="10.500" cy="18" r="3" fill="#fff"/><circle cx="19.500" cy="18" r="3" fill="#fff"/><path d="M6 13c5-3 13-3 18 0v7c-5 3-13 3-18 0z" fill="none" stroke="#fff" stroke-width="1.800"/></svg><b class="badge coral">9+</b><i class="run"></i></span>
    </div>
    <div class="tray">
        <svg class="tray-i chevron" viewBox="0 0 24 24"><path d="M5 16l7-8 7 8" fill="none" stroke="#eee" stroke-width="2.200"/></svg>
        <svg class="tray-i cloud" viewBox="0 0 24 24"><path d="M6 20a5 5 0 0 1-1-10 7 7 0 0 1 13-1 5.500 5.500 0 0 1 0 11z" fill="#e4e4e4"/></svg>
        <svg class="tray-i mic" viewBox="0 0 24 24"><rect x="9" y="2" width="6" height="14" rx="3" fill="none" stroke="#9adfee" stroke-width="1.600"/><path d="M5 11a7 7 0 0 0 14 0M12 18v5" fill="none" stroke="#9adfee" stroke-width="1.600"/></svg>
        <svg class="tray-i wifi" viewBox="0 0 24 24"><path d="M1 9a16 16 0 0 1 22 0M5 13a10 10 0 0 1 14 0M8.500 16.500a5 5 0 0 1 7 0" fill="none" stroke="#eee" stroke-width="2"/><circle cx="12" cy="20" r="2" fill="#eee"/></svg>
        <svg class="tray-i speaker" viewBox="0 0 24 24"><path d="M3 9h4l6-5v16l-6-5H3z" fill="none" stroke="#eee" stroke-width="1.600"/><path d="M16 8a6 6 0 0 1 0 8M19 5a10 10 0 0 1 0 14" fill="none" stroke="#aaa" stroke-width="1.400"/></svg>
        <svg class="tray-i battery" viewBox="0 0 24 24"><rect x="4" y="9" width="16" height="12" rx="2" fill="none" stroke="#eee" stroke-width="1.600"/><path d="M20 13h2v4h-2z" fill="#eee"/><path d="M6 10h7v10H6z" fill="#eee"/><path d="M9 2L6 9h5l-2 5" fill="none" stroke="#eee" stroke-width="1.500"/></svg>
        <div class="clock"><span>3:00 AM</span><span>5/1/2024</span></div>
        <svg class="tray-i bell" viewBox="0 0 24 24"><path d="M4 18c2-2 2-5 2-8a6 6 0 0 1 12 0c0 3 0 6 2 8zM10 20a2 2 0 0 0 4 0" fill="none" stroke="#eee" stroke-width="1.600"/></svg>
        <svg class="tray-copilot" viewBox="0 0 32 32"><use href="#i-copilot" width="30" height="26"/><rect x="9" y="19" width="22" height="12" rx="2" fill="#f5c518"/><text x="20" y="28.500" class="ico-pre">PRE</text></svg>
    </div>
</footer>
</body>
</html>
```

FILE: styles.css
```css
*{
    box-sizing: border-box;
}

html, body{
    margin: 0;
    padding: 0;
}

body{
    width: 1920px;
    height: 1080px;
    overflow: hidden;
    font-family: "Open Sans", "Noto Sans", sans-serif;
    color: #f0f0f0;
    background-color: #232a1c;
}

.defs{
    display: block;
    height: 0;
}

.ln{
    fill: none;
    stroke: #e6e6e6;
    stroke-width: 1.5;
}
.ln.bold{ stroke-width: 2.2; }
.ln.thin{ stroke-width: 1.2; }
.ln.dim{ stroke: #a8a8a8; }
.ln.dim2{ stroke: #777; }
.ln.dash{ stroke-dasharray: 3 2; }

.pdf-word{
    font: 700 7px "Liberation Sans", sans-serif;
    fill: #fff;
    text-anchor: middle;
}

.windows{
    display: flex;
    height: 1020px;
}

.window{
    width: 960px;
    height: 1020px;
    display: flex;
    flex-direction: column;
    background-color: #3b3b3b;
    border: 1px solid #707070;
    border-left-width: 0;
}

/* tabs */
.tabstrip{
    height: 50px;
    flex: none;
    display: flex;
    align-items: stretch;
    background-color: #202020;
}

.inactive .tabstrip{
    background-color: #2e2e2e;
}

.profile{
    width: 30px;
    height: 30px;
    margin: 15px 15px 0 14px;
    border-radius: 50%;
    background-color: #ececec;
    overflow: hidden;
    display: flex;
    flex-direction: column;
    align-items: center;
    flex: none;
}

.head{
    width: 11px;
    height: 11px;
    margin-top: 8px;
    border-radius: 50%;
    background-color: #777;
}

.shoulders{
    width: 18px;
    height: 12px;
    margin-top: 1px;
    border-radius: 9px 9px 0 0;
    background-color: #777;
}

.icn{
    width: 22px;
    height: 22px;
    flex: none;
}

.tabstrip .icn{
    align-self: center;
    margin-top: 10px;
}

.wk{ margin-left: 8px; }
.vt{ margin-left: 30px; }

.tab-sep{
    width: 1px;
    height: 26px;
    margin: 18px 0 0 24px;
    background-color: #777;
    flex: none;
}

.tab{
    display: flex;
    align-items: center;
    height: 40px;
    margin-top: 10px;
    flex: none;
    position: relative;
    font-size: 14.5px;
    color: #e6e6e6;
}

.tab.mini{
    width: 65.5px;
    padding-left: 9px;
}

.tab.mini:not(.current):not(.last)::after{
    content: "";
    position: absolute;
    right: 0;
    top: 8px;
    height: 26px;
    width: 1px;
    background-color: #777;
}

.pdf-icon{
    width: 18px;
    height: 22px;
    flex: none;
}

.pdf-icon.off{
    opacity: 0.45;
}

.tab-label{
    margin-left: 13px;
    white-space: nowrap;
    overflow: hidden;
    width: 25px;
    letter-spacing: -0.6px;
}

.tab.current{
    background-color: #3b3b3b;
    border-radius: 9px 9px 0 0;
    padding-left: 7px;
}

.tab.mini.current{
    padding-left: 7px;
}

.tab-x{
    width: 12px;
    height: 12px;
    margin-left: 14px;
    flex: none;
}

.tab.wide{
    width: 174px;
    padding-left: 13px;
    color: #bdbdbd;
    font-size: 15px;
}

.tab.wide .tab-label{
    width: 94px;
    margin-left: 14px;
    letter-spacing: -0.3px;
}

.tab.wide .tab-x{
    margin-left: 10px;
}

.tab.wide.current{
    width: 176px;
    padding-left: 14px;
    color: #d0d0d0;
}

.tab.third{
    width: 173px;
    padding-left: 13px;
}

.tab.third::after{
    content: "";
    position: absolute;
    right: 0;
    top: 8px;
    height: 26px;
    width: 1px;
    background-color: #777;
}

.new-tab{
    margin-left: 15px;
}

.win-controls{
    margin-left: auto;
    display: flex;
    color: #e8e8e8;
}

.inactive .win-controls{
    color: #777;
    opacity: 0.5;
}

.win-btn{
    width: 58px;
    height: 40px;
    display: flex;
    align-items: center;
    justify-content: center;
}

.close{
    width: 13px;
    height: 13px;
}

.min{
    width: 13px;
    height: 1.5px;
    background-color: #e8e8e8;
}

.max{
    width: 13px;
    height: 13px;
    border: 1.5px solid #e8e8e8;
    border-radius: 2px;
}

/* address bar */
.addressbar{
    height: 47px;
    flex: none;
    display: flex;
    align-items: center;
    padding-left: 25px;
    background-color: #3b3b3b;
}

.dim-icn{
    opacity: 0.45;
}

.reload{
    margin-left: 33px;
}

.pill{
    width: 497px;
    height: 37px;
    margin-left: 24px;
    border-radius: 19px;
    background-color: #2a2a2a;
    display: flex;
    align-items: center;
    padding: 0 20px 0 22px;
    font-size: 16.5px;
}

.pill .info{
    width: 20px;
    height: 20px;
}

.scheme{
    margin-left: 11px;
    padding-right: 15px;
    border-right: 1px solid #888;
    line-height: 21px;
}

.url{
    margin-left: 15px;
    white-space: nowrap;
}

.zoom-out{
    margin-left: auto;
    width: 20px;
    height: 20px;
}

.star{
    margin-left: 29px;
}

.star.outline{
    margin-left: auto;
}

.act{
    margin-left: 32px;
}

.act.first{
    margin-left: 25px;
}

.copilot{
    width: 30px;
    height: 30px;
    margin-left: 29px;
    flex: none;
}

/* pdf viewer */
.frame{
    flex: 1;
    display: flex;
    min-height: 0;
}

.pdf{
    width: 899px;
    margin-left: 6px;
    display: flex;
    border-radius: 8px 12px 12px 8px;
    overflow: hidden;
    background-color: #2a2a2a;
    flex: none;
    margin-top: 1px;
}

.pdf-main{
    width: 880px;
    display: flex;
    flex-direction: column;
}

.pdf-tools{
    height: 50px;
    flex: none;
    display: flex;
    align-items: center;
    padding-left: 6px;
    background-color: #3b3b3b;
}

.tbtn{
    width: 44px;
    height: 40px;
    display: flex;
    align-items: center;
    justify-content: center;
    flex: none;
}

.tbtn svg{
    width: 22px;
    height: 22px;
}

.tsep{
    width: 1px;
    height: 26px;
    margin-left: 5px;
    background-color: #6a6a6a;
    flex: none;
}

.tbtn.hl{
    margin-left: 4px;
}

.tbtn.chev{
    width: 22px;
}

.tbtn.chev svg{
    width: 14px;
    height: 14px;
}

.tbtn.dots{
    margin-left: 10px;
}

.tool-mid{
    display: flex;
    align-items: center;
    margin-left: 69px;
}

.tool-mid.shifted{
    margin-left: 73px;
}

.tbtn.fit{
    margin-left: 2px;
}

.page-box{
    width: 50px;
    height: 40px;
    margin-left: 8px;
    display: flex;
    align-items: center;
    justify-content: center;
    border: 1px solid #777;
    border-radius: 2px;
    background-color: #444;
    font-size: 15px;
}

.page-of{
    margin-left: 12px;
    font-size: 15px;
    white-space: nowrap;
}

.after-of{
    margin-left: 15px;
}

.tbtn.rot{
    margin-left: 6px;
}

.tbtn.two{
    margin-left: 5px;
}

.tool-end{
    display: flex;
    align-items: center;
    margin-left: auto;
    margin-right: 6px;
}

.tool-end .tsep{
    margin-left: 7px;
}

.tbtn.save{
    margin-left: 4px;
}

.pages{
    flex: 1;
    min-height: 0;
    overflow: hidden;
    padding-right: 6px;
    display: flex;
    flex-direction: column;
}

.page{
    width: 874px;
    flex: none;
    background-color: #fff;
}

.page-svg{
    display: block;
    width: 100%;
    height: 100%;
}

.left-one{
    height: 556px;
}

.left-two{
    height: 277px;
    margin-top: 16px;
}

.scan{
    padding-right: 0;
}

.scan .page{
    width: 879px;
    margin-left: 1px;
    background-image: linear-gradient(90deg, #e0e0e0, #fff 20px);
}

.scan-top{
    height: 38px;
}

.scan-main{
    height: 793px;
    margin-top: 18px;
}

/* page text, drawn in the svg */
.tx{
    font-family: "Liberation Serif", serif;
    fill: #222;
}

.s11{ font-size: 12px; }
.s13{ font-size: 13px; }
.s15{ font-size: 15px; }
.s19{ font-size: 19px; }

.eq{
    fill: #111;
}

.bd{ font-weight: 700; }
.it{ font-style: italic; }
.blue{ fill: #1a6fc4; }
.mid{ text-anchor: middle; }

.sub{
    font-size: 0.72em;
}

.fig{
    font: 700 13px "Liberation Sans", sans-serif;
    fill: #1a5fa8;
    text-anchor: middle;
}

.th{
    font: 18px "Liberation Serif", serif;
    fill: #222;
}

.prob{
    font: 14px "Liberation Sans", sans-serif;
    fill: #555;
}

.prob-no{
    font: 700 14px "Liberation Sans", sans-serif;
    fill: #1a4fa0;
}

.sf{
    font: 14px "Liberation Sans", sans-serif;
    fill: #111;
}

.sf .s{
    font-size: 11px;
    font-weight: 700;
}

.w{
    fill: none;
    stroke: #333;
    stroke-width: 1.2;
}

.w .thick{
    stroke-width: 2;
    stroke: #111;
}

.w2{
    fill: none;
    stroke: #111;
    stroke-width: 1.7;
}

.w2 .thick{
    stroke-width: 2.2;
}

.w2 .thick2{
    stroke-width: 3;
}

.w2 .thin-gray{
    stroke: #888;
    stroke-width: 1.3;
}

.zbox rect{
    fill: #fff;
    stroke: #111;
    stroke-width: 1.7;
}

.arrow{
    fill: none;
    stroke: #1a6fc4;
    stroke-width: 1.2;
}

/* scrollbars */
.hscroll{
    height: 20px;
    flex: none;
    display: flex;
    align-items: center;
    background-color: #2a2a2a;
}

.arrow-l{
    width: 0;
    height: 0;
    margin-left: 9px;
    border-style: solid;
    border-width: 10px 10px 10px 0;
    border-color: transparent #a0a0a0 transparent transparent;
}

.hthumb{
    width: 794px;
    height: 12px;
    margin-left: 38px;
    border-radius: 6px;
    background-color: #a0a0a0;
}

.hthumb.short{
    width: 699px;
    margin-left: 15px;
}

.arrow-r{
    width: 0;
    height: 0;
    margin-left: auto;
    margin-right: 4px;
    border-style: solid;
    border-width: 10px 0 10px 10px;
    border-color: transparent transparent transparent #a0a0a0;
}

.vscroll{
    width: 19px;
    flex: none;
    display: flex;
    flex-direction: column;
    align-items: center;
    background-color: #2a2a2a;
}

.varrow{
    width: 14px;
    height: 12px;
    margin-top: 9px;
    flex: none;
}

.varrow.down{
    height: 16px;
    margin-top: auto;
    margin-bottom: 27px;
}

.vthumb{
    width: 11px;
    height: 24px;
    margin-top: 569px;
    border-radius: 5px;
    background-color: #a0a0a0;
}

.vthumb.high{
    margin-top: 532px;
}

/* edge sidebar */
.sidebar{
    flex: 1;
    display: flex;
    flex-direction: column;
    align-items: center;
    padding-top: 1px;
}

.side-slot{
    width: 45px;
    height: 45px;
    margin: 2.65px 0;
    display: flex;
    align-items: center;
    justify-content: center;
    flex: none;
    border-radius: 9px;
}

.side-slot svg{
    width: 22px;
    height: 22px;
}

.side-slot.on{
    background-color: #4a4a4a;
}

.side-sep{
    width: 35px;
    height: 1px;
    margin-top: 15px;
    background-color: #6a6a6a;
    flex: none;
}

.side-sep.low{
    margin-top: auto;
    margin-bottom: 6px;
}

.side-slot.add{
    margin-top: 16px;
}

.side-slot.gear{
    margin-bottom: 6px;
}

/* taskbar */
.taskbar{
    height: 60px;
    display: flex;
    align-items: center;
    background-image: linear-gradient(90deg, #222b1c, #26281c);
    border-top: 1px solid #555;
    position: relative;
}

.tb-weather{
    width: 32px;
    height: 40px;
    margin-left: 24px;
    position: relative;
    flex: none;
}

.tb-weather svg{
    width: 32px;
    height: 40px;
    display: block;
}

.badge{
    position: absolute;
    min-width: 20px;
    height: 22px;
    border-radius: 11px;
    font: 400 14px/22px "Open Sans", sans-serif;
    text-align: center;
    padding: 0 3px;
}

.tb-weather .badge{
    top: -8px;
    left: 15px;
    height: 26px;
    line-height: 26px;
}

.badge.pink{ background-color: #f29aa8; color: #222; }
.badge.red{ background-color: #c4262e; color: #fff; top: 4px; right: 4px; }
.badge.blue{ background-color: #2a8fe8; color: #fff; top: 4px; right: 3px; }
.badge.coral{ background-color: #e35a5a; color: #fff; top: 4px; right: 3px; }

.tb-start{
    width: 29px;
    height: 29px;
    margin-left: 192px;
    flex: none;
}

.tb-search{
    width: 275px;
    height: 40px;
    margin-left: 17px;
    border-radius: 20px;
    background-color: #3e4535;
    border: 1px solid #4b5142;
    display: flex;
    align-items: center;
    padding-left: 14px;
    font-size: 17px;
    color: #e0e0e0;
    flex: none;
}

.tb-search svg{
    width: 20px;
    height: 24px;
    flex: none;
}

.tb-search span{
    margin-left: 11px;
}

.tb-search .scene{
    width: 52px;
    height: 40px;
    margin-left: auto;
    margin-right: 7px;
}

.tb-taskview{
    width: 30px;
    height: 34px;
    margin-left: 15px;
    flex: none;
}

.tb-apps{
    display: flex;
    margin-left: 12.5px;
    flex: none;
}

.tb-app{
    width: 55px;
    height: 50px;
    display: flex;
    align-items: center;
    justify-content: center;
    position: relative;
}

.tb-app > svg{
    width: 31px;
    height: 31px;
}

.tb-app.active{
    width: 44px;
    margin: 0 5.5px;
    background-color: #2d3326;
    border: 1px solid #3b4033;
    border-radius: 6px;
}

.run{
    position: absolute;
    left: 50%;
    bottom: 1px;
    width: 7px;
    height: 7px;
    margin-left: -3.5px;
    border-radius: 50%;
    background-color: #9a9a9a;
}

.tb-app.active .run{
    width: 20px;
    height: 5px;
    margin-left: -10px;
    border-radius: 3px;
    background-color: #5cc8f5;
}

.ico-t{
    font: 700 14px "Liberation Sans", sans-serif;
    fill: #fff;
    text-anchor: middle;
}

.ico-new{
    font: 700 7.5px "Liberation Sans", sans-serif;
    fill: #10303a;
    text-anchor: middle;
}

.ico-pre{
    font: 700 8px "Liberation Sans", sans-serif;
    fill: #333;
    text-anchor: middle;
}

.tray{
    display: flex;
    align-items: center;
    margin-left: 71.5px;
}

.tray-i{
    width: 22px;
    height: 24px;
    flex: none;
}

.chevron{ margin: 0 9px; }
.cloud{ margin: 0 9px; }
.mic{ margin: 0 9px; height: 28px; }
.wifi{ margin-left: 15px; }
.speaker{ margin-left: 7px; }
.battery{ margin-left: 9px; }

.clock{
    width: 70px;
    margin-left: 6px;
    display: flex;
    flex-direction: column;
    align-items: flex-end;
    font-size: 15px;
    line-height: 20px;
    color: #f0f0f0;
    white-space: nowrap;
}

.bell{
    margin-left: 10px;
}

.tray-copilot{
    width: 34px;
    height: 34px;
    margin-left: 13px;
    flex: none;
}
```
